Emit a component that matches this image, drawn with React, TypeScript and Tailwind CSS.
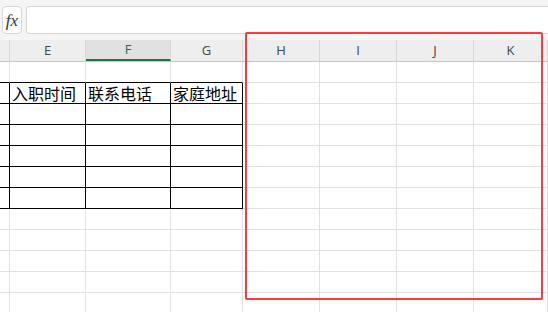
import React from 'react';

const cols = ['', 'E', 'F', 'G', 'H', 'I', 'J', 'K'];
const widths = ['w-[10px]', 'w-[76px]', 'w-[85px]', 'w-[72px]', 'w-[77px]', 'w-[77px]', 'w-[77px]', 'flex-1'];
const headerRow = ['', '入职时间', '联系电话', '家庭地址'];

// rows below the column header: 0 = blank, 1 = table header, 2..6 = table body, rest blank
const rowCount = 12;

const Cell: React.FC<{ row: number; col: number }> = ({ row, col }) => {
  const inTable = row >= 1 && row <= 6 && col <= 3;
  const aboveTable = row === 0 && col <= 3;
  const right = inTable ? 'border-r-black' : 'border-r-[#e1e1e1]';
  const bottom = inTable || aboveTable ? 'border-b-black' : 'border-b-[#e1e1e1]';
  const text = row === 1 ? headerRow[col] : '';
  return (
    <div
      className={`${widths[col]} shrink-0 h-[21px] border-r border-b ${right} ${bottom} whitespace-nowrap pl-[2px] text-[16px] leading-[21px] text-black`}
    >
      {text}
    </div>
  );
};

const App: React.FC = () => {
  return (
    <div
      className="relative w-[548px] h-[312px] overflow-hidden bg-white"
      style={{ fontFamily: '"Noto Sans CJK SC", "Noto Sans", sans-serif' }}
    >
      {/* formula bar */}
      <div className="h-[40px] bg-[#f5f5f5] flex items-start gap-[4px] pt-[6px] pl-[2px]">
        <div className="w-[20px] h-[28px] bg-white border border-[#d6d6d6] rounded-[4px] flex items-center justify-center">
          <span className="italic text-[17px] leading-none text-[#333]" style={{ fontFamily: '"Liberation Serif", serif' }}>
            fx
          </span>
        </div>
        <div className="flex-1 h-[28px] bg-white border border-[#d6d6d6] rounded-l-[4px] border-r-0" />
      </div>

      {/* column header */}
      <div className="flex h-[22px] bg-[#eeeeee] border-b border-[#c6c6c6]">
        {cols.map((c, i) => (
          <div
            key={i}
            className={`${widths[i]} shrink-0 h-full border-r border-[#d8d8d8] flex items-center justify-center text-[13px] ${
              c === 'F' ? 'bg-[#e1e1e1] text-[#1f6e43] border-b-2 border-b-[#217346]' : 'text-[#444]'
            }`}
            style={{ fontFamily: '"Open Sans", "Noto Sans", sans-serif' }}
          >
            {c}
          </div>
        ))}
      </div>

      {/* grid */}
      <div className="flex flex-col">
        {Array.from({ length: rowCount }).map((_, r) => (
          <div key={r} className="flex">
            {cols.map((_, c) => (
              <Cell key={c} row={r} col={c} />
            ))}
          </div>
        ))}
      </div>

      {/* annotation box */}
      <div className="absolute left-[245px] top-[32px] w-[298px] h-[268px] border-2 border-[#fb3b3f] rounded-[2px] pointer-events-none" />
    </div>
  );
};

export default App;
